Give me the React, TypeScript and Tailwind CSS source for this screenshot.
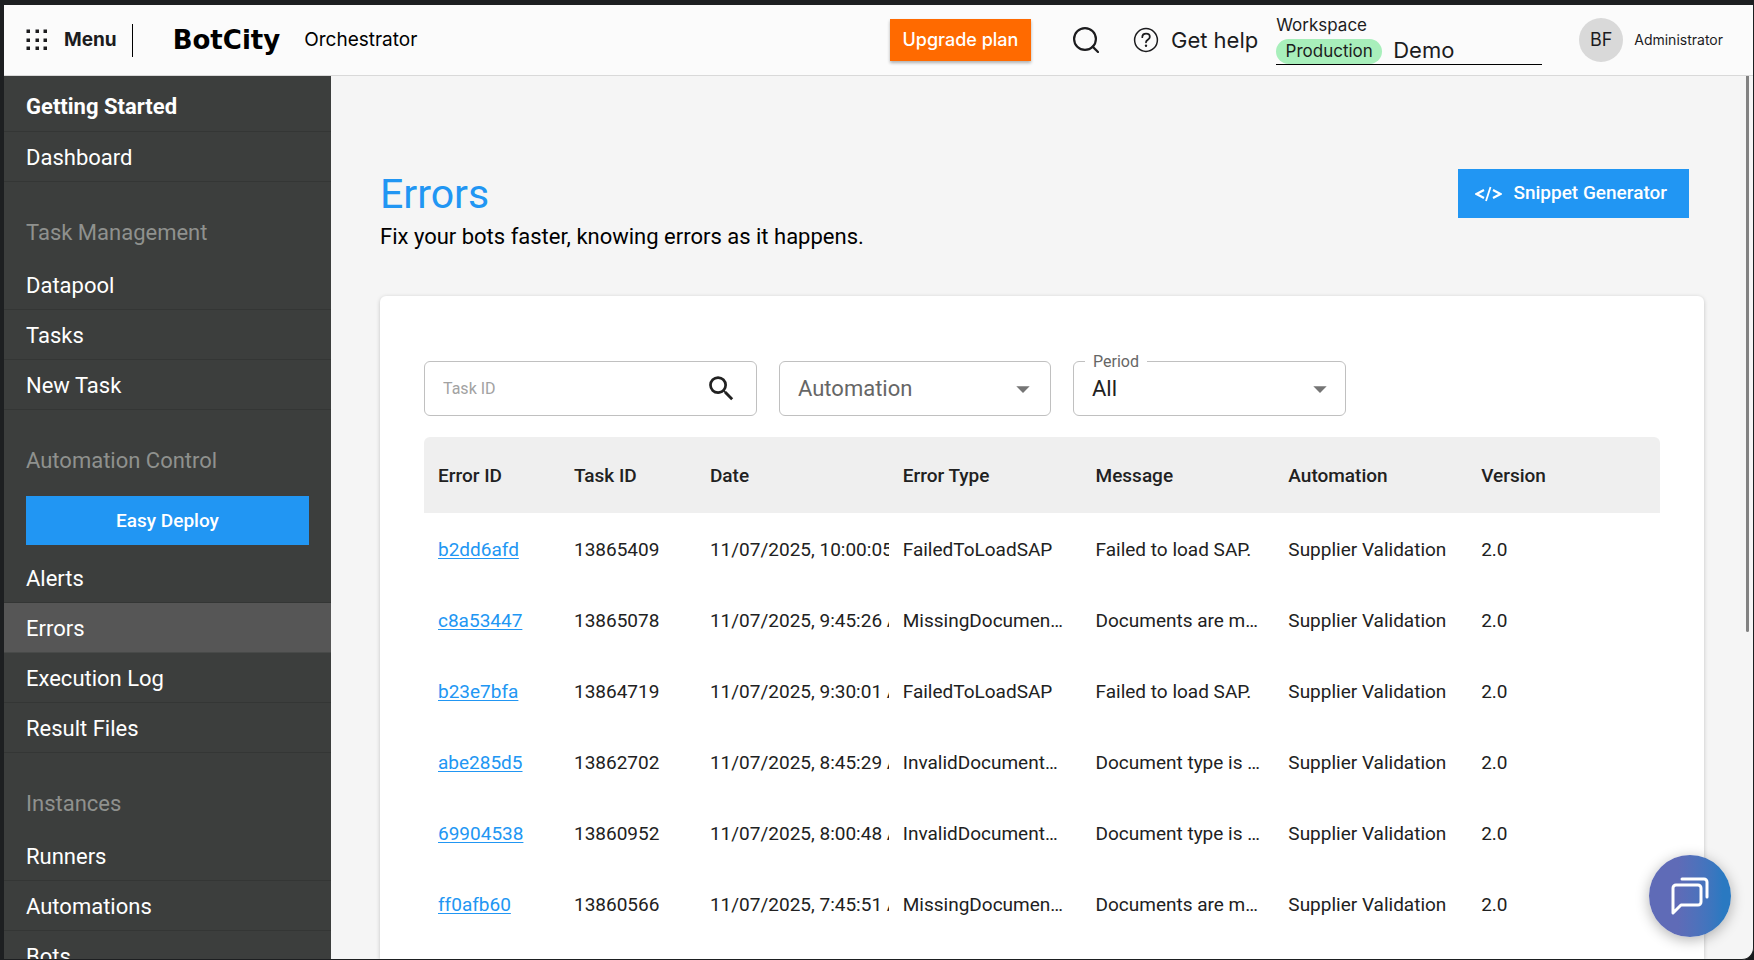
import { ReactNode } from "react"
import { MdArrowDropDown, MdSearch } from "react-icons/md"

interface BotError {
  id: string
  taskId: string
  date: string
  type: string
  message: string
  automation: string
  version: string
}

const errors: BotError[] = [
  { id: "b2dd6afd", taskId: "13865409", date: "11/07/2025, 10:00:05 AM", type: "FailedToLoadSAP", message: "Failed to load SAP.", automation: "Supplier Validation", version: "2.0" },
  { id: "c8a53447", taskId: "13865078", date: "11/07/2025, 9:45:26 AM", type: "MissingDocumentError", message: "Documents are missing.", automation: "Supplier Validation", version: "2.0" },
  { id: "b23e7bfa", taskId: "13864719", date: "11/07/2025, 9:30:01 AM", type: "FailedToLoadSAP", message: "Failed to load SAP.", automation: "Supplier Validation", version: "2.0" },
  { id: "abe285d5", taskId: "13862702", date: "11/07/2025, 8:45:29 AM", type: "InvalidDocumentType", message: "Document type is invalid.", automation: "Supplier Validation", version: "2.0" },
  { id: "69904538", taskId: "13860952", date: "11/07/2025, 8:00:48 AM", type: "InvalidDocumentType", message: "Document type is invalid.", automation: "Supplier Validation", version: "2.0" },
  { id: "ff0afb60", taskId: "13860566", date: "11/07/2025, 7:45:51 AM", type: "MissingDocumentError", message: "Documents are missing.", automation: "Supplier Validation", version: "2.0" },
]

const columns = ["Error ID", "Task ID", "Date", "Error Type", "Message", "Automation", "Version"]

function NavItem({ label, active }: { label: string; active?: boolean }) {
  return (
    <li>
      <a
        href="#"
        aria-current={active ? "page" : undefined}
        className={
          active
            ? "flex h-[50px] items-center border-b border-[#484a49] bg-[#565656] px-[22px] pt-0.5"
            : "flex h-[50px] items-center border-b border-[#343635] px-[22px] pt-0.5"
        }
      >
        {label}
      </a>
    </li>
  )
}

function NavHeading({ children }: { children: ReactNode }) {
  return <h2 className="px-[22px] pt-[39px] pb-[15px] leading-6 text-[#8f918e]">{children}</h2>
}

function Header() {
  return (
    <header className="flex h-[71px] shrink-0 items-center justify-between border-b border-[#d9d9d9] bg-[#fbfbfb] pr-[30px] pl-[22px] font-['Inter',sans-serif] text-[#1c1c1e]">
      <div className="flex items-center">
        <button className="flex h-[33px] items-center gap-4 border-r border-black pr-[15px] text-[19px] font-bold">
          <svg width="22" height="22" viewBox="0 0 22 22" fill="currentColor" aria-hidden="true">
            {[0, 9, 17].map((y) =>
              [0, 9, 17].map((x) => <rect key={`${x}-${y}`} x={x + 0.5} y={y + 0.5} width="3.5" height="3.5" />)
            )}
          </svg>
          Menu
        </button>
        <a href="#" className="ml-10 font-['DejaVu_Sans',sans-serif] text-[26px] leading-8 font-bold text-black">
          BotCity
        </a>
        <span className="ml-6 text-[19px] text-black">Orchestrator</span>
      </div>

      <div className="flex items-center">
        <button className="h-[42px] w-[141px] bg-[#ff6a00] text-lg font-medium text-white shadow-[0_2px_3px_rgba(0,0,0,0.3)]">
          Upgrade plan
        </button>
        <button aria-label="Search" className="ml-[42px]">
          <svg width="26" height="26" viewBox="0 0 26 26" fill="none" stroke="currentColor" strokeWidth="2.2">
            <circle cx="12" cy="12" r="10.9" />
            <path d="M19.6 19.6l5.4 5.4" strokeLinecap="round" />
          </svg>
        </button>
        <a href="#" className="ml-[34px] flex items-center gap-3 text-[22px]">
          <svg width="26" height="26" viewBox="0 0 26 26" fill="none" stroke="currentColor" strokeWidth="1.5" aria-hidden="true">
            <circle cx="13" cy="13" r="11.4" />
            <path d="M9.3 10.2c0-2.1 1.6-3.5 3.8-3.5s3.7 1.3 3.7 3.2c0 2.8-3.8 2.9-3.8 5.4" strokeWidth="1.8" strokeLinecap="round" />
            <circle cx="13" cy="18.8" r="1.2" fill="currentColor" stroke="none" />
          </svg>
          Get help
        </a>
        <div className="ml-[18px] w-[266px] border-b border-black">
          <label htmlFor="workspace" className="block pb-1 text-[17px] leading-5">
            Workspace
          </label>
          <div className="flex items-start gap-[11px]">
            <span className="flex h-[25px] w-[106px] items-center justify-center rounded-full bg-[#a8efbb] text-[17px]">
              Production
            </span>
            <select id="workspace" className="h-[22px] flex-1 appearance-none text-[22px] leading-[22px]">
              <option>Demo</option>
            </select>
          </div>
        </div>
        <div className="ml-[37px] flex items-center gap-[11px]">
          <span className="flex size-11 items-center justify-center rounded-full bg-[#d9d9d9] text-lg">BF</span>
          <span className="text-sm">Administrator</span>
        </div>
      </div>
    </header>
  )
}

function Sidebar() {
  return (
    <nav className="w-[327px] shrink-0 overflow-hidden bg-[#3c3e3d] text-[22px] text-white">
      <ul>
        <li>
          <a href="#" className="flex h-14 items-center border-b border-[#343635] px-[22px] pt-1.5 font-bold">
            Getting Started
          </a>
        </li>
        <NavItem label="Dashboard" />
      </ul>
      <NavHeading>Task Management</NavHeading>
      <ul>
        <NavItem label="Datapool" />
        <NavItem label="Tasks" />
        <NavItem label="New Task" />
      </ul>
      <NavHeading>Automation Control</NavHeading>
      <div className="px-[22px] py-2">
        <button className="h-[49px] w-full bg-[#2196f3] pt-0.5 text-[19px] font-medium">Easy Deploy</button>
      </div>
      <ul>
        <NavItem label="Alerts" />
        <NavItem label="Errors" active />
        <NavItem label="Execution Log" />
        <NavItem label="Result Files" />
      </ul>
      <NavHeading>Instances</NavHeading>
      <ul>
        <NavItem label="Runners" />
        <NavItem label="Automations" />
        <NavItem label="Bots" />
      </ul>
    </nav>
  )
}

function Filters() {
  return (
    <div className="flex gap-[22px]">
      <div className="flex h-[55px] w-[333px] items-center rounded-md border border-[#c0c0c0] pr-[18px] pl-[18px]">
        <input
          aria-label="Task ID"
          placeholder="Task ID"
          className="min-w-0 flex-1 text-base outline-none placeholder:text-[#a2a2a2]"
        />
        <button aria-label="Search errors" className="text-[#212121]">
          <MdSearch size={33} />
        </button>
      </div>
      <div className="relative w-[272px]">
        <select
          aria-label="Automation"
          className="h-[55px] w-full appearance-none rounded-md border border-[#c0c0c0] px-[18px] text-[22px] text-[#666]"
        >
          <option>Automation</option>
        </select>
        <MdArrowDropDown size={32} className="pointer-events-none absolute top-3 right-3 text-[#757575]" />
      </div>
      <div className="relative w-[273px]">
        <label htmlFor="period" className="absolute -top-2 left-3 bg-white px-2 text-base leading-[18px] text-[#666]">
          Period
        </label>
        <select
          id="period"
          className="h-[55px] w-full appearance-none rounded-md border border-[#c0c0c0] px-[18px] text-[22px] text-[#212121]"
        >
          <option>All</option>
        </select>
        <MdArrowDropDown size={32} className="pointer-events-none absolute top-3 right-2.5 text-[#757575]" />
      </div>
    </div>
  )
}

function ErrorsTable() {
  return (
    <table className="mt-[21px] w-full table-fixed text-left text-[19px] text-[#212121]">
      <colgroup>
        <col className="w-[11%]" />
        <col className="w-[11%]" />
        <col />
        <col />
        <col />
        <col />
        <col />
      </colgroup>
      <thead>
        <tr className="h-[76px]">
          {columns.map((column) => (
            <th key={column} className="bg-[#efefef] px-[14px] pt-0.5 font-medium first:rounded-tl-md last:rounded-tr-md">
              {column}
            </th>
          ))}
        </tr>
      </thead>
      <tbody>
        {errors.map((error) => (
          <tr key={error.id} className="h-[71px]">
            <td className="px-[14px] pt-[3px]">
              <a href="#" className="text-[#2196f3] underline decoration-1 underline-offset-2">
                {error.id}
              </a>
            </td>
            <td className="px-[14px] pt-[3px]">{error.taskId}</td>
            <td className="overflow-hidden px-[14px] pt-[3px] whitespace-nowrap">{error.date}</td>
            <td className="truncate px-[14px] pt-[3px]">{error.type}</td>
            <td className="truncate px-[14px] pt-[3px]">{error.message}</td>
            <td className="truncate px-[14px] pt-[3px]">{error.automation}</td>
            <td className="px-[14px] pt-[3px]">{error.version}</td>
          </tr>
        ))}
      </tbody>
    </table>
  )
}

export default function App() {
  return (
    <div className="h-screen overflow-hidden bg-[#17191c]">
      <div className="relative flex h-full flex-col overflow-hidden rounded-br-xl border-t-[5px] border-r border-b border-l-4 border-[#1d1f21] bg-[#f5f5f5] font-['Roboto',sans-serif]">
        <Header />
        <div className="flex min-h-0 flex-1">
          <Sidebar />
          <main className="flex min-w-0 flex-1 flex-col overflow-hidden px-[49px]">
            <div className="flex shrink-0 items-start justify-between pt-[93px] pr-[15px]">
              <div>
                <h1 className="text-[41px] leading-[50px] text-[#2196f3]">Errors</h1>
                <p className="text-[22px] leading-9 text-black">Fix your bots faster, knowing errors as it happens.</p>
              </div>
              <button className="flex h-[49px] items-center gap-[11px] bg-[#2196f3] pr-[22px] pl-[17px] text-[19px] font-medium text-white">
                <svg width="27" height="16" viewBox="0 0 27 16" fill="none" stroke="currentColor" strokeWidth="2.2" aria-hidden="true">
                  <path d="M9 4L1.5 8L9 12M18 4l7.5 4L18 12" />
                  <path d="M15.5 1L11 15" strokeWidth="1.8" />
                </svg>
                Snippet Generator
              </button>
            </div>
            <section className="mt-[41px] flex-1 rounded-t-md bg-white px-11 pt-[65px] shadow-[0_1px_4px_rgba(0,0,0,0.2)]">
              <Filters />
              <ErrorsTable />
            </section>
          </main>
        </div>

        <div className="absolute top-[71px] right-1 h-[556px] w-[3px] rounded-b bg-[#828282]" />
        <button
          aria-label="Open chat"
          className="absolute right-[22px] bottom-[22px] flex size-[82px] items-center justify-center rounded-full bg-linear-to-r from-[#5f6bb7] from-35% to-[#2a79c1] to-90% text-white shadow-[0_3px_14px_rgba(0,0,0,0.3)]"
        >
          <svg width="38" height="38" viewBox="0 0 38 38" fill="none" stroke="currentColor" strokeWidth="3" strokeLinecap="round" strokeLinejoin="round">
            <path d="M5 8h22a3 3 0 0 1 3 3v14a3 3 0 0 1-3 3H10l-8 8V11a3 3 0 0 1 3-3z" />
            <path d="M11 2h22a3 3 0 0 1 3 3v15" />
          </svg>
        </button>
      </div>
    </div>
  )
}
